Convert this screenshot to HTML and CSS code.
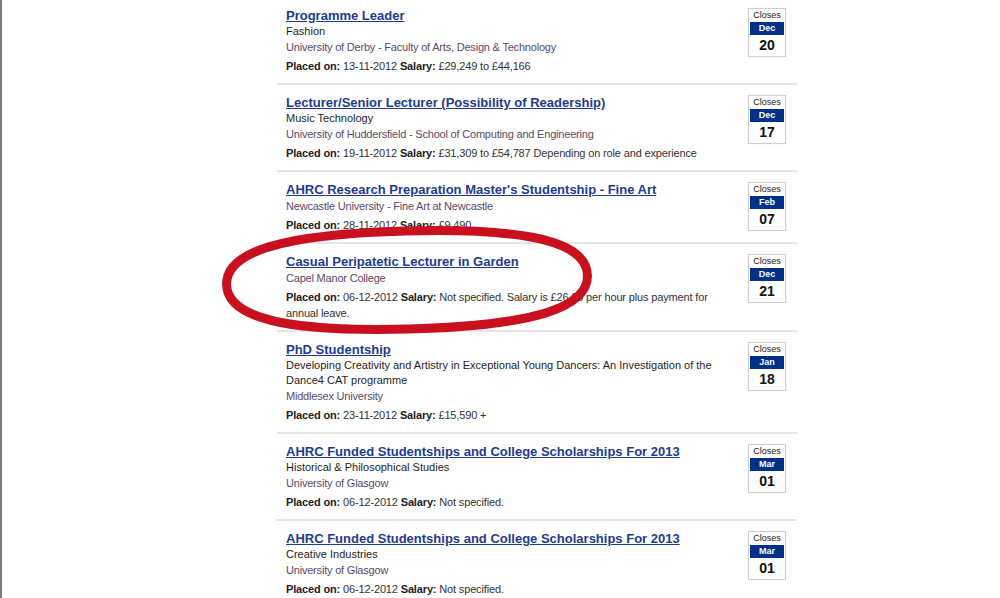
FILE: index.html
```html
<!DOCTYPE html>
<html lang="en">
<head>
    <meta charset="UTF-8">
    <title>Jobs - Closing Soon</title>
    <link rel="stylesheet" href="styles.css">
</head>
<body>
    <div class="page">
        <div class="job-list">

            <div class="job">
                <div class="job-info">
                    <a class="job-title" href="#">Programme Leader</a>
                    <p class="job-sub">Fashion</p>
                    <p class="job-org">University of Derby - Faculty of Arts, Design &amp; Technology</p>
                    <p class="job-meta"><b>Placed on:</b> 13-11-2012 <b>Salary:</b> £29,249 to £44,166</p>
                </div>
                <div class="closes">
                    <span class="closes-label">Closes</span>
                    <span class="closes-month">Dec</span>
                    <span class="closes-day">20</span>
                </div>
            </div>

            <div class="job">
                <div class="job-info">
                    <a class="job-title" href="#">Lecturer/Senior Lecturer (Possibility of Readership)</a>
                    <p class="job-sub">Music Technology</p>
                    <p class="job-org">University of Huddersfield - School of Computing and Engineering</p>
                    <p class="job-meta"><b>Placed on:</b> 19-11-2012 <b>Salary:</b> £31,309 to £54,787 Depending on role and experience</p>
                </div>
                <div class="closes">
                    <span class="closes-label">Closes</span>
                    <span class="closes-month">Dec</span>
                    <span class="closes-day">17</span>
                </div>
            </div>

            <div class="job">
                <div class="job-info">
                    <a class="job-title" href="#">AHRC Research Preparation Master's Studentship - Fine Art</a>
                    <p class="job-org">Newcastle University - Fine Art at Newcastle</p>
                    <p class="job-meta"><b>Placed on:</b> 28-11-2012 <b>Salary:</b> £9,490</p>
                </div>
                <div class="closes">
                    <span class="closes-label">Closes</span>
                    <span class="closes-month">Feb</span>
                    <span class="closes-day">07</span>
                </div>
            </div>

            <div class="job">
                <div class="job-info">
                    <a class="job-title" href="#">Casual Peripatetic Lecturer in Garden</a>
                    <p class="job-org">Capel Manor College</p>
                    <p class="job-meta"><b>Placed on:</b> 06-12-2012 <b>Salary:</b> Not specified. Salary is £26.00 per hour plus payment for annual leave.</p>
                </div>
                <div class="closes">
                    <span class="closes-label">Closes</span>
                    <span class="closes-month">Dec</span>
                    <span class="closes-day">21</span>
                </div>
                <!-- hand-drawn highlight over this entry -->
                <svg class="circled" width="380" height="122" viewBox="0 0 380 122">
                    <path d="M9.5 60 C9.5 26.7 67.3 11 190 11 C312.7 11 370.5 26.7 370.5 60 C370.5 93.3 312.7 109 190 109 C67.3 109 9.5 93.3 9.5 60 Z"
                          transform="rotate(-1.5 190 60)" fill="none" stroke="#c8101e" stroke-width="9"/>
                </svg>
            </div>

            <div class="job">
                <div class="job-info">
                    <a class="job-title" href="#">PhD Studentship</a>
                    <p class="job-sub">Developing Creativity and Artistry in Exceptional Young Dancers: An Investigation of the Dance4 CAT programme</p>
                    <p class="job-org">Middlesex University</p>
                    <p class="job-meta"><b>Placed on:</b> 23-11-2012 <b>Salary:</b> £15,590 +</p>
                </div>
                <div class="closes">
                    <span class="closes-label">Closes</span>
                    <span class="closes-month">Jan</span>
                    <span class="closes-day">18</span>
                </div>
            </div>

            <div class="job">
                <div class="job-info">
                    <a class="job-title" href="#">AHRC Funded Studentships and College Scholarships For 2013</a>
                    <p class="job-sub">Historical &amp; Philosophical Studies</p>
                    <p class="job-org">University of Glasgow</p>
                    <p class="job-meta"><b>Placed on:</b> 06-12-2012 <b>Salary:</b> Not specified.</p>
                </div>
                <div class="closes">
                    <span class="closes-label">Closes</span>
                    <span class="closes-month">Mar</span>
                    <span class="closes-day">01</span>
                </div>
            </div>

            <div class="job">
                <div class="job-info">
                    <a class="job-title" href="#">AHRC Funded Studentships and College Scholarships For 2013</a>
                    <p class="job-sub">Creative Industries</p>
                    <p class="job-org">University of Glasgow</p>
                    <p class="job-meta"><b>Placed on:</b> 06-12-2012 <b>Salary:</b> Not specified.</p>
                </div>
                <div class="closes">
                    <span class="closes-label">Closes</span>
                    <span class="closes-month">Mar</span>
                    <span class="closes-day">01</span>
                </div>
            </div>

        </div>
    </div>
</body>
</html>
```

FILE: styles.css
```css
body {
    margin: 0;
    background: #fff;
    font-family: 'Liberation Sans', Arial, sans-serif;
    color: #333;
    overflow: hidden;
}

.page {
    border-left: 2px solid #7a7a7a;
    min-height: 100vh;
}

.job-list {
    width: 520px;
    margin: -2px 0 0 275px;
}

.job {
    position: relative;
    display: flex;
    justify-content: space-between;
    align-items: flex-start;
    padding: 10px 11px 9px 9px;
    border-bottom: 2px solid #e6e6e6;
}

.job-info {
    width: 445px;
}

.job-title {
    display: block;
    font-size: 13px;
    font-weight: bold;
    line-height: 16px;
    color: #1d3c8e;
    text-decoration: underline;
}

.job-sub {
    margin: 0;
    font-size: 11px;
    line-height: 15px;
    color: #1e1e1e;
}

.job-org {
    margin: 0;
    font-size: 11px;
    line-height: 17px;
    color: #5c4a68;
    letter-spacing: -0.2px;
}

.job-meta {
    margin: 2px 0 0;
    font-size: 11px;
    line-height: 16px;
    color: #333;
    letter-spacing: -0.15px;
}

.job-meta b {
    color: #222;
}

.closes {
    width: 36px;
    border: 1px solid #cfcfcf;
    box-shadow: 0 0 1px rgba(0, 0, 0, 0.1);
    display: flex;
    flex-direction: column;
    align-items: stretch;
    text-align: center;
    background: #fff;
}

.closes-label {
    font-size: 9px;
    line-height: 13px;
    color: #222;
}

.closes-month {
    margin: 0 1px;
    background: #003087;
    color: #fff;
    font-size: 9px;
    font-weight: bold;
    line-height: 13px;
}

.closes-day {
    font-size: 14px;
    font-weight: bold;
    line-height: 21px;
    color: #111;
}

.circled {
    position: absolute;
    left: -60px;
    top: -24px;
    pointer-events: none;
}
```
